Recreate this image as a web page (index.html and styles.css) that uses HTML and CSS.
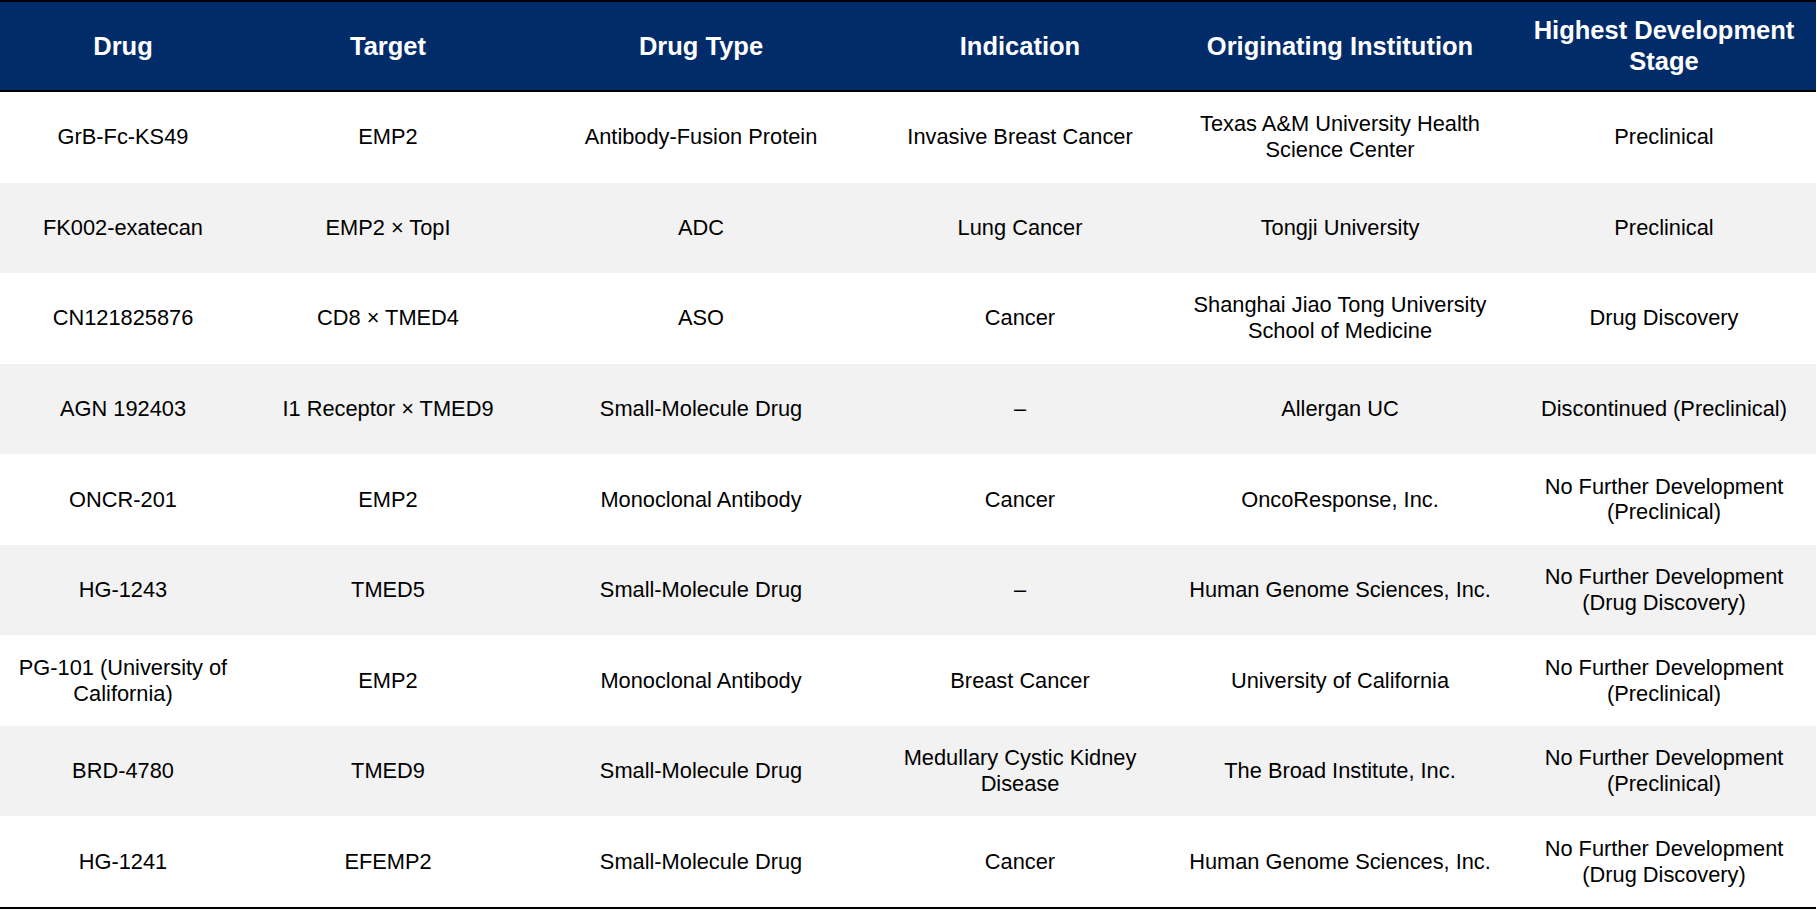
FILE: index.html
```html
<!DOCTYPE html>
<html lang="en">
<head>
<meta charset="utf-8">
<title>EMP2 / TMED Drug Pipeline</title>
<link rel="stylesheet" href="styles.css">
</head>
<body>
<table class="pipeline">
  <colgroup>
    <col class="c-drug">
    <col class="c-target">
    <col class="c-type">
    <col class="c-ind">
    <col class="c-inst">
    <col class="c-stage">
  </colgroup>
  <thead>
    <tr class="head-row">
      <th>Drug</th>
      <th>Target</th>
      <th>Drug Type</th>
      <th>Indication</th>
      <th>Originating Institution</th>
      <th>Highest Development Stage</th>
    </tr>
  </thead>
  <tbody>
    <tr class="row">
      <td>GrB-Fc-KS49</td>
      <td>EMP2</td>
      <td>Antibody-Fusion Protein</td>
      <td>Invasive Breast Cancer</td>
      <td>Texas A&amp;M University Health Science Center</td>
      <td>Preclinical</td>
    </tr>
    <tr class="row alt">
      <td>FK002-exatecan</td>
      <td>EMP2 × TopI</td>
      <td>ADC</td>
      <td>Lung Cancer</td>
      <td>Tongji University</td>
      <td>Preclinical</td>
    </tr>
    <tr class="row">
      <td>CN121825876</td>
      <td>CD8 × TMED4</td>
      <td>ASO</td>
      <td>Cancer</td>
      <td>Shanghai Jiao Tong University School of Medicine</td>
      <td>Drug Discovery</td>
    </tr>
    <tr class="row alt">
      <td>AGN 192403</td>
      <td>I1 Receptor × TMED9</td>
      <td>Small-Molecule Drug</td>
      <td>–</td>
      <td>Allergan UC</td>
      <td>Discontinued (Preclinical)</td>
    </tr>
    <tr class="row">
      <td>ONCR-201</td>
      <td>EMP2</td>
      <td>Monoclonal Antibody</td>
      <td>Cancer</td>
      <td>OncoResponse, Inc.</td>
      <td>No Further Development (Preclinical)</td>
    </tr>
    <tr class="row alt">
      <td>HG-1243</td>
      <td>TMED5</td>
      <td>Small-Molecule Drug</td>
      <td>–</td>
      <td>Human Genome Sciences, Inc.</td>
      <td>No Further Development (Drug Discovery)</td>
    </tr>
    <tr class="row">
      <td>PG-101 (University of California)</td>
      <td>EMP2</td>
      <td>Monoclonal Antibody</td>
      <td>Breast Cancer</td>
      <td>University of California</td>
      <td>No Further Development (Preclinical)</td>
    </tr>
    <tr class="row alt">
      <td>BRD-4780</td>
      <td>TMED9</td>
      <td>Small-Molecule Drug</td>
      <td>Medullary Cystic Kidney Disease</td>
      <td>The Broad Institute, Inc.</td>
      <td>No Further Development (Preclinical)</td>
    </tr>
    <tr class="row">
      <td>HG-1241</td>
      <td>EFEMP2</td>
      <td>Small-Molecule Drug</td>
      <td>Cancer</td>
      <td>Human Genome Sciences, Inc.</td>
      <td>No Further Development (Drug Discovery)</td>
    </tr>
  </tbody>
</table>
</body>
</html>
```
FILE: styles.css
```css
html, body {
  margin: 0;
  padding: 0;
  background: #ffffff;
}

body {
  font-family: "Liberation Sans", Arial, sans-serif;
  color: #000000;
}

.pipeline {
  width: 1816px;
  table-layout: fixed;
  border-collapse: separate;
  border-spacing: 0;
  border-top: 2px solid #000000;
  border-bottom: 2px solid #000000;
}

.c-drug { width: 246px; }
.c-target { width: 284px; }
.c-type { width: 342px; }
.c-ind { width: 296px; }
.c-inst { width: 344px; }
.c-stage { width: 304px; }

.head-row {
  height: 90px;
}

.head-row th {
  background: #022c69;
  border-bottom: 2px solid #000000;
  color: #ffffff;
  font-weight: bold;
  font-size: 25.5px;
  line-height: 30.6px;
  text-align: center;
  vertical-align: middle;
  padding: 0 12px;
}

.row {
  height: 90.55px;
}

.row td {
  background: #ffffff;
  font-size: 21.8px;
  line-height: 25.9px;
  text-align: center;
  vertical-align: middle;
  padding: 0 12px;
}

.row.alt td {
  background: #f2f2f2;
}
```
